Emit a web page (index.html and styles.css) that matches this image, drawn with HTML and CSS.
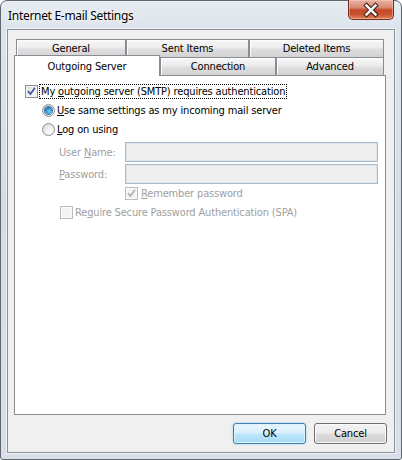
FILE: index.html
```html
<!DOCTYPE html>
<html>
<head>
<meta charset="utf-8">
<title>Internet E-mail Settings</title>
<link rel="stylesheet" href="styles.css">
</head>
<body>
<div class="window">
  <div class="titlebar">
    <span class="title">Internet E-mail Settings</span>
    <div class="close">
      <svg width="44" height="18" viewBox="0 0 44 18">
        <path d="M17.5 4.5 L26.5 13.5 M26.5 4.5 L17.5 13.5" stroke="#4a2a24" stroke-width="4.6" stroke-linecap="square" fill="none"/>
        <path d="M17.5 4.5 L26.5 13.5 M26.5 4.5 L17.5 13.5" stroke="#ffffff" stroke-width="2.4" stroke-linecap="square" fill="none"/>
      </svg>
    </div>
  </div>
  <div class="client">
    <div class="tabs">
      <div class="tabrow back">
        <div class="tab w-general">General</div>
        <div class="tab w-sent">Sent Items</div>
        <div class="tab w-deleted">Deleted Items</div>
      </div>
      <div class="tabrow front">
        <div class="tab selected w-outgoing">Outgoing Server</div>
        <div class="tab w-connection">Connection</div>
        <div class="tab w-advanced">Advanced</div>
      </div>
    </div>
    <div class="panel">
      <div class="row r-auth">
        <span class="check">
          <svg width="11" height="11" viewBox="0 0 11 11"><path d="M2 5.2 L4.4 8 L9 1.8" stroke="#4b5c95" stroke-width="1.8" fill="none"/></svg>
        </span>
        <span class="label focus">My <u>o</u>utgoing server (SMTP) requires authentication</span>
      </div>
      <div class="row r-radio">
        <span class="radio on"><span class="dot"></span></span>
        <span class="label"><u>U</u>se same settings as my incoming mail server</span>
      </div>
      <div class="row r-radio">
        <span class="radio"></span>
        <span class="label"><u>L</u>og on using</span>
      </div>
      <div class="field f-user">
        <span class="flabel disabled">User <u>N</u>ame:</span>
        <span class="input"></span>
      </div>
      <div class="field f-pass">
        <span class="flabel disabled"><u>P</u>assword:</span>
        <span class="input"></span>
      </div>
      <div class="row r-remember">
        <span class="check disabled">
          <svg width="11" height="11" viewBox="0 0 11 11"><path d="M2 5.2 L4.4 8 L9 1.8" stroke="#b4b4b4" stroke-width="1.8" fill="none"/></svg>
        </span>
        <span class="label disabled"><u>R</u>emember password</span>
      </div>
      <div class="row r-spa">
        <span class="check disabled"></span>
        <span class="label disabled">Re<u>q</u>uire Secure Password Authentication (SPA)</span>
      </div>
    </div>
    <div class="buttons">
      <button class="btn default">OK</button>
      <button class="btn">Cancel</button>
    </div>
  </div>
</div>
</body>
</html>
```

FILE: styles.css
```css
* { box-sizing: border-box; }
html, body { margin: 0; padding: 0; }
body {
  width: 402px;
  height: 460px;
  overflow: hidden;
  background: #ffffff;
  font-family: "DejaVu Sans Condensed", "DejaVu Sans", sans-serif;
  font-size: 11px;
  letter-spacing: -0.16px;
  color: #000;
}
u { text-decoration: underline; text-underline-offset: 1px; }

.window {
  width: 402px;
  height: 460px;
  display: flex;
  flex-direction: column;
  padding: 0 6px 6px 6px;
  border: 1px solid #60666e;
  border-radius: 7px 7px 3px 3px;
  background: linear-gradient(to bottom, #e7ecf2 0px, #dde4eb 28px, #d6dde5 200px, #d9dfe6 460px);
}

.titlebar {
  height: 28px;
  flex: none;
  display: flex;
  align-items: flex-start;
  justify-content: space-between;
  padding-left: 1px;
}
.title {
  font-family: "Noto Sans", "Open Sans", sans-serif;
  font-size: 12px;
  letter-spacing: -0.3px;
  line-height: 16px;
  margin-top: 7px;
  color: #000;
  text-shadow: 0 0 6px #ffffff, 0 0 3px #ffffff;
}
.close {
  width: 46px;
  height: 20px;
  margin-top: -1px;
  margin-right: 1px;
  border: 1px solid #6e2e24;
  border-top: none;
  border-radius: 0 0 5px 5px;
  background: linear-gradient(to bottom, #e9b2a4 0%, #d88870 40%, #c5492c 52%, #c8502f 75%, #df8658 100%);
  box-shadow: inset 0 0 0 1px rgba(255,210,190,0.45);
  display: flex;
  align-items: center;
  justify-content: center;
}
.close svg { display: block; }

.client {
  flex: 1;
  display: flex;
  flex-direction: column;
  border: 1px solid #8a9098;
  background: #f0f0f0;
  padding: 9px 8px 0 6px;
  box-shadow: 0 0 0 1px rgba(255,255,255,0.6);
}

.tabs { display: flex; flex-direction: column; }
.tabrow { display: flex; height: 18px; align-items: flex-start; }
.tabrow.back { margin-left: 2px; }
.tab {
  height: 18px;
  border: 1px solid #898c95;
  border-bottom: none;
  background: linear-gradient(to bottom, #f7f7f7 0%, #ececec 45%, #dedede 55%, #d3d3d3 100%);
  box-shadow: inset 1px 1px 0 #fdfdfd;
  display: flex;
  align-items: center;
  justify-content: center;
  line-height: 13px;
  padding-bottom: 1px;
}
.tab.selected {
  position: relative;
  z-index: 2;
  margin-top: -2px;
  height: 21px;
  background: #ffffff;
  box-shadow: none;
  padding-bottom: 0;
}
.w-general { width: 110px; }
.w-sent { width: 123px; }
.w-deleted { width: 135px; }
.w-outgoing { width: 146px; }
.w-connection { width: 116px; }
.w-advanced { width: 108px; }

.panel {
  height: 340px;
  flex: none;
  border: 1px solid #898c95;
  background: #ffffff;
  padding-top: 6px;
  display: flex;
  flex-direction: column;
}

.row {
  height: 19px;
  display: flex;
  align-items: center;
  white-space: nowrap;
}
.r-auth { padding-left: 10px; }
.r-auth .label { margin-left: 1px; }
.r-radio { padding-left: 27px; }
.r-radio .label { margin-left: 2px; }
.r-remember { padding-left: 110px; }
.r-remember .label { margin-left: 3px; }
.r-spa { padding-left: 45px; }
.r-spa .label { margin-left: 2px; }

.label { line-height: 13px; }
.label.focus { border: 1px dotted #000; padding: 0 1px; line-height: 13px; }
.disabled { color: #a0a0a0; }

.check {
  width: 13px;
  height: 13px;
  flex: none;
  border: 1px solid #8e8f8f;
  background: linear-gradient(135deg, #d9d9d9 0%, #f2f2f2 60%, #fbfbfb 100%);
  box-shadow: inset 0 0 0 1px #f4f4f4;
  display: flex;
  align-items: center;
  justify-content: center;
}
.check svg { display: block; }
.check.disabled {
  border-color: #bcbcbc;
  background: #f4f4f4;
  box-shadow: inset 0 0 0 1px #fafafa;
}

.radio {
  width: 13px;
  height: 13px;
  flex: none;
  border-radius: 50%;
  border: 1px solid #8e8f8f;
  background: radial-gradient(circle at 65% 70%, #ffffff 0%, #f1f1f1 40%, #d2d2d2 100%);
  display: flex;
  align-items: center;
  justify-content: center;
}
.radio .dot {
  width: 7px;
  height: 7px;
  border-radius: 50%;
  background: radial-gradient(circle at 60% 65%, #6fd5f8 0%, #2a8bc6 55%, #1f4f88 100%);
  box-shadow: 0 0 0 1px #3d6fa0;
}

.field {
  display: flex;
  align-items: center;
  padding-left: 44px;
  height: 20px;
}
.f-user { margin-top: 3px; }
.f-pass { margin-top: 2px; }
.flabel { width: 66px; flex: none; white-space: nowrap; }
.input {
  width: 253px;
  height: 20px;
  border: 1px solid #a9bacd;
  background: #efefef;
  box-shadow: inset 0 0 0 1px #dde4ec;
}

.buttons {
  display: flex;
  justify-content: flex-end;
  gap: 8px;
  margin-top: 8px;
  margin-right: -1px;
}
.btn {
  width: 73px;
  height: 21px;
  padding: 0;
  font-family: inherit;
  font-size: 11px;
  letter-spacing: -0.16px;
  color: #000;
  border: 1px solid #707070;
  border-radius: 3px;
  background: linear-gradient(to bottom, #f2f2f2 0%, #ebebeb 48%, #dddddd 52%, #cfcfcf 100%);
  box-shadow: inset 0 0 0 1px #fbfbfb;
}
.btn.default {
  border-color: #3c7fb1;
  background: linear-gradient(to bottom, #eaf6fd 0%, #d9f0fc 48%, #bee6fd 52%, #a7d9f5 100%);
  box-shadow: inset 0 0 0 1px #dff3fd, 0 0 2px #7ec4ef;
}
```
